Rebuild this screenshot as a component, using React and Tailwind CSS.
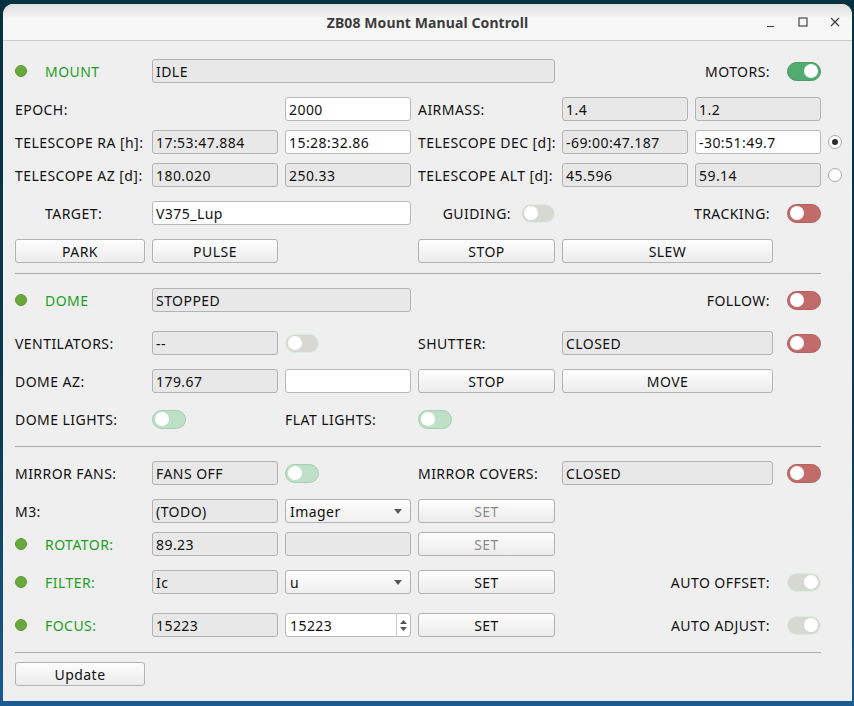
import React from "react";

const COLS =
  "grid grid-cols-[130px_126px_126px_137px_126px_78px_41px_20px] gap-x-[7px] items-center h-6";

function Led() {
  return <span className="inline-block w-3 h-3 rounded-full bg-[#6aa83c] border border-[#5c9a32] mr-[18px]" />;
}

function Field({ children, className = "" }) {
  return (
    <div className={"h-6 flex items-center pl-[3px] bg-[#e8e8e8] border border-[#b3b3b3] rounded-[3px] whitespace-nowrap overflow-hidden " + className}>
      {children}
    </div>
  );
}

function Input({ children, className = "" }) {
  return (
    <div className={"h-6 flex items-center pl-[3px] bg-white border border-[#b9b9b9] rounded-[3px] whitespace-nowrap overflow-hidden " + className}>
      {children}
    </div>
  );
}

function Btn({ children, className = "", disabled = false }) {
  return (
    <div
      className={
        "h-6 flex items-center justify-center bg-[linear-gradient(#fdfdfd,#ececec)] border border-[#b3b3b3] rounded-[3px] " +
        (disabled ? "text-[#8c8c8c] " : "text-[#111111] ") +
        className
      }
    >
      {children}
    </div>
  );
}

function Combo({ children }) {
  return (
    <div className="h-6 flex items-center justify-between pl-[4px] pr-[8px] bg-[linear-gradient(#fdfdfd,#f0f0f0)] border border-[#b3b3b3] rounded-[3px]">
      <span>{children}</span>
      <svg width="8" height="5" viewBox="0 0 8 5">
        <path d="M0 0 L8 0 L4 5 Z" fill="#5a5a5a" />
      </svg>
    </div>
  );
}

function Spin({ children }) {
  return (
    <div className="h-6 flex items-center bg-white border border-[#b9b9b9] rounded-[3px] overflow-hidden">
      <span className="flex-1 pl-[4px]">{children}</span>
      <div className="w-[14px] h-full border-l border-[#d0d0d0] flex flex-col items-center justify-center gap-[3px]">
        <svg width="7" height="4" viewBox="0 0 7 4"><path d="M0 4 L3.5 0 L7 4 Z" fill="#555" /></svg>
        <svg width="7" height="4" viewBox="0 0 7 4"><path d="M0 0 L3.5 4 L7 0 Z" fill="#555" /></svg>
      </div>
    </div>
  );
}

function Toggle({ variant }) {
  const styles = {
    on: "bg-[#52ab70] border-[#4a9e66] justify-end",
    red: "bg-[#c16b6b] border-[#b56060] justify-start",
    lightgreen: "bg-[#bde0c6] border-[#a6cfb1] justify-start",
    gray: "bg-[#d8d8d2] border-[#dfeee3] justify-start",
    grayon: "bg-[#d8d8d2] border-[#dfeee3] justify-end",
  };
  return (
    <div className={"w-[34px] h-[19px] rounded-full border flex items-center px-[2px] " + styles[variant]}>
      <div className="w-[14px] h-[14px] rounded-full bg-white" />
    </div>
  );
}

function Radio({ checked }) {
  return (
    <div className="w-[14px] h-[14px] rounded-full bg-white border border-[#a9a9a9] flex items-center justify-center">
      {checked && <div className="w-[6px] h-[6px] rounded-full bg-[#2d2d2d]" />}
    </div>
  );
}

function Sep({ mt }) {
  return <div className={"h-px w-[806px] bg-[#ababab] " + mt} />;
}

export default function App() {
  return (
    <div
      className="w-[854px] h-[706px] overflow-hidden bg-[linear-gradient(180deg,#08313f_0%,#0b3a4d_60%,#1b5b93_100%)] pl-[3px] pt-[4px]"
      style={{ fontFamily: '"Noto Sans", "Open Sans", sans-serif' }}
    >
      <div className="w-[849px] h-[697px] bg-[#efefef] rounded-t-[10px] overflow-hidden flex flex-col">
        {/* Title bar */}
        <div className="h-[37px] shrink-0 border-b border-[#cbcbcb] bg-[linear-gradient(#dedede,#f6f6f6_40%,#f7f7f7)] flex items-center relative">
          <div className="flex-1 text-center text-[14px] font-bold text-[#3d3d3d] tracking-[0.1px]">
            ZB08 Mount Manual Controll
          </div>
          <div className="absolute right-[12px] top-0 h-full flex items-center gap-[22px] text-[#3a3a3a]">
            <svg width="10" height="10" viewBox="0 0 10 10"><path d="M1 9.5 H8" stroke="#3a3a3a" strokeWidth="1.2" /></svg>
            <svg width="10" height="10" viewBox="0 0 10 10"><rect x="1" y="1" width="8" height="8" fill="none" stroke="#3a3a3a" strokeWidth="1.1" /></svg>
            <svg width="10" height="10" viewBox="0 0 10 10"><path d="M1 1 L9 9 M9 1 L1 9" stroke="#3a3a3a" strokeWidth="1.1" /></svg>
          </div>
        </div>

        {/* Content */}
        <div className="pl-[12px] text-[14px] tracking-[0.45px] text-[#111111] flex flex-col">
          {/* MOUNT */}
          <div className={COLS + " mt-[18px]"}>
            <div className="flex items-center"><Led /><span className="text-[#1ea01e]">MOUNT</span></div>
            <Field className="col-span-3">IDLE</Field>
            <div className="col-span-2 text-right pr-[3px]">MOTORS:</div>
            <div className="flex justify-end"><Toggle variant="on" /></div>
          </div>
          {/* EPOCH */}
          <div className={COLS + " mt-[14px]"}>
            <div>EPOCH:</div>
            <div />
            <Input>2000</Input>
            <div>AIRMASS:</div>
            <Field>1.4</Field>
            <Field className="col-span-2">1.2</Field>
          </div>
          {/* RA */}
          <div className={COLS + " mt-[9px]"}>
            <div className="whitespace-nowrap">TELESCOPE RA [h]:</div>
            <Field>17:53:47.884</Field>
            <Input>15:28:32.86</Input>
            <div className="whitespace-nowrap">TELESCOPE DEC [d]:</div>
            <Field>-69:00:47.187</Field>
            <Input className="col-span-2">-30:51:49.7</Input>
            <Radio checked />
          </div>
          {/* AZ */}
          <div className={COLS + " mt-[9px]"}>
            <div className="whitespace-nowrap">TELESCOPE AZ [d]:</div>
            <Field>180.020</Field>
            <Field>250.33</Field>
            <div className="whitespace-nowrap">TELESCOPE ALT [d]:</div>
            <Field>45.596</Field>
            <Field className="col-span-2">59.14</Field>
            <Radio />
          </div>
          {/* TARGET */}
          <div className={COLS + " mt-[14px]"}>
            <div className="pl-[30px]">TARGET:</div>
            <Input className="col-span-2">V375_Lup</Input>
            <div className="flex items-center justify-end gap-[10px]">
              <span>GUIDING:</span>
              <Toggle variant="gray" />
            </div>
            <div className="col-span-2 text-right pr-[3px]">TRACKING:</div>
            <div className="flex justify-end"><Toggle variant="red" /></div>
          </div>
          {/* Buttons */}
          <div className={COLS + " mt-[14px]"}>
            <Btn>PARK</Btn>
            <Btn>PULSE</Btn>
            <div />
            <Btn>STOP</Btn>
            <Btn className="col-span-2">SLEW</Btn>
          </div>

          <Sep mt="mt-[10px]" />

          {/* DOME */}
          <div className={COLS + " mt-[14px]"}>
            <div className="flex items-center"><Led /><span className="text-[#1ea01e]">DOME</span></div>
            <Field className="col-span-2">STOPPED</Field>
            <div />
            <div className="col-span-2 text-right pr-[3px]">FOLLOW:</div>
            <div className="flex justify-end"><Toggle variant="red" /></div>
          </div>
          {/* VENTILATORS */}
          <div className={COLS + " mt-[19px]"}>
            <div>VENTILATORS:</div>
            <Field>--</Field>
            <div className="flex"><Toggle variant="gray" /></div>
            <div>SHUTTER:</div>
            <Field className="col-span-2">CLOSED</Field>
            <div className="flex justify-end"><Toggle variant="red" /></div>
          </div>
          {/* DOME AZ */}
          <div className={COLS + " mt-[14px]"}>
            <div>DOME AZ:</div>
            <Field>179.67</Field>
            <Input />
            <Btn>STOP</Btn>
            <Btn className="col-span-2">MOVE</Btn>
          </div>
          {/* DOME LIGHTS */}
          <div className={COLS + " mt-[14px]"}>
            <div>DOME LIGHTS:</div>
            <div className="flex"><Toggle variant="lightgreen" /></div>
            <div>FLAT LIGHTS:</div>
            <div className="flex"><Toggle variant="lightgreen" /></div>
          </div>

          <Sep mt="mt-[15px]" />

          {/* MIRROR FANS */}
          <div className={COLS + " mt-[14px]"}>
            <div className="whitespace-nowrap">MIRROR FANS:</div>
            <Field>FANS OFF</Field>
            <div className="flex"><Toggle variant="lightgreen" /></div>
            <div className="whitespace-nowrap">MIRROR COVERS:</div>
            <Field className="col-span-2">CLOSED</Field>
            <div className="flex justify-end"><Toggle variant="red" /></div>
          </div>
          {/* M3 */}
          <div className={COLS + " mt-[14px]"}>
            <div>M3:</div>
            <Field>(TODO)</Field>
            <Combo>Imager</Combo>
            <Btn disabled>SET</Btn>
          </div>
          {/* ROTATOR */}
          <div className={COLS + " mt-[9px]"}>
            <div className="flex items-center"><Led /><span className="text-[#1ea01e]">ROTATOR:</span></div>
            <Field>89.23</Field>
            <Field />
            <Btn disabled>SET</Btn>
          </div>
          {/* FILTER */}
          <div className={COLS + " mt-[14px]"}>
            <div className="flex items-center"><Led /><span className="text-[#1ea01e]">FILTER:</span></div>
            <Field>Ic</Field>
            <Combo>u</Combo>
            <Btn>SET</Btn>
            <div className="col-span-2 text-right pr-[3px] whitespace-nowrap">AUTO OFFSET:</div>
            <div className="flex justify-end"><Toggle variant="grayon" /></div>
          </div>
          {/* FOCUS */}
          <div className={COLS + " mt-[19px]"}>
            <div className="flex items-center"><Led /><span className="text-[#1ea01e]">FOCUS:</span></div>
            <Field>15223</Field>
            <Spin>15223</Spin>
            <Btn>SET</Btn>
            <div className="col-span-2 text-right pr-[3px] whitespace-nowrap">AUTO ADJUST:</div>
            <div className="flex justify-end"><Toggle variant="grayon" /></div>
          </div>

          <Sep mt="mt-[15px]" />

          {/* Update */}
          <div className={COLS + " mt-[9px]"}>
            <Btn>Update</Btn>
          </div>
        </div>
      </div>
    </div>
  );
}
